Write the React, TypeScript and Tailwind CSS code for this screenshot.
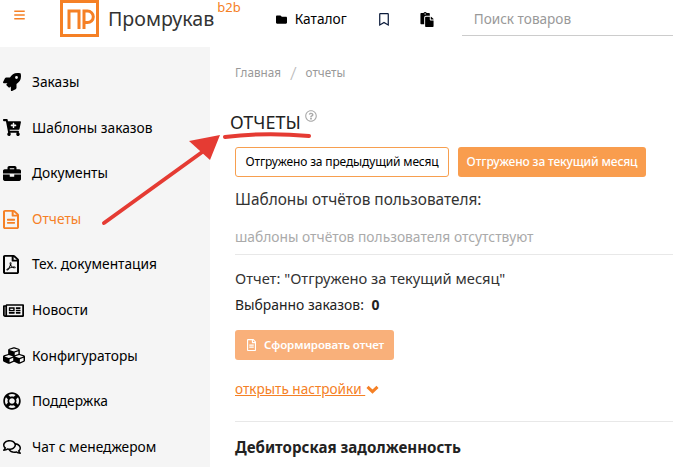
import React from "react";
import { FaBars, FaFolder, FaRegBookmark, FaPaste, FaRocket, FaCartPlus, FaBriefcase, FaRegFileAlt, FaRegFilePdf, FaRegNewspaper, FaCubes, FaRegLifeRing, FaRegComments, FaRegQuestionCircle } from "react-icons/fa";

const items = [
  { label: "Заказы", Icon: FaRocket, cls: "w-[18px] h-[18px]" },
  { label: "Шаблоны заказов", Icon: FaCartPlus, cls: "w-[18px] h-[17px]" },
  { label: "Документы", Icon: FaBriefcase, cls: "w-[18px] h-[17px]" },
  { label: "Отчеты", Icon: FaRegFileAlt, cls: "w-[16px] h-[19px]", active: true },
  { label: "Тех. документация", Icon: FaRegFilePdf, cls: "w-[16px] h-[19px]" },
  { label: "Новости", Icon: FaRegNewspaper, cls: "w-[21px] h-[17px]" },
  { label: "Конфигураторы", Icon: FaCubes, cls: "w-[22px] h-[19px]" },
  { label: "Поддержка", Icon: FaRegLifeRing, cls: "w-[18px] h-[18px]" },
  { label: "Чат с менеджером", Icon: FaRegComments, cls: "w-[18px] h-[16px]" },
];

export default function App() {
  return (
    <div className="relative w-[673px] h-[467px] overflow-hidden bg-white font-['Noto_Sans',sans-serif] text-[#111]">
      <header className="h-[47px] flex items-start">
        <FaBars className="ml-[13px] mt-[9px] w-[13px] h-[12px] text-[#f58025]" />
        <svg viewBox="0 0 39 37" className="ml-[34px] w-[39px] h-[37px]">
          <rect x="1.500" y="1.500" width="36" height="34" fill="none" stroke="#f58025" strokeWidth="3" />
          <path d="M9 29V11H19V29M24 29V11h3.500a5.800 5.800 0 0 1 0 11.600H24" fill="none" stroke="#f58025" strokeWidth="3" />
        </svg>
        <span className="ml-[9px] mt-[5px] text-[19.600px] leading-[28px] text-[#333]">Промрукав</span>
        <span className="ml-[3px] mt-0 text-[13px] leading-[14px] text-[#f58025]">b2b</span>
        <FaFolder className="ml-[34px] mt-[14px] w-[13px] h-[11px] text-black" />
        <span className="ml-[7px] mt-[9px] text-[13.700px] leading-[20px] text-black">Каталог</span>
        <FaRegBookmark className="ml-[32px] mt-[13px] w-[10px] h-[13px] text-[#0a1a3a]" />
        <FaPaste className="ml-[31px] mt-[12px] w-[14px] h-[15px] text-black" />
        <div className="ml-[28px] flex-1 h-[36px] border-b border-[#ccc] pl-[12px] pt-[9px] text-[13.600px] leading-[20px] text-[#999]">Поиск товаров</div>
      </header>
      <div className="flex h-[420px]">
        <nav className="w-[210px] shrink-0 bg-[#f5f5f5] pt-[12.500px] flex flex-col">
          {items.map(({ label, Icon, cls, active }) => (
            <div key={label} className={`h-[45.6px] shrink-0 flex items-center pl-[3px] text-[13.750px] ${active ? "text-[#f58025]" : "text-black"}`}>
              <span className="w-[29px] flex justify-start"><Icon preserveAspectRatio="none" className={cls} /></span>
              {label}
            </div>
          ))}
        </nav>
        <main className="flex-1 pl-[25px] min-w-0">
          <div className="mt-[17px] h-[18px] flex items-center text-[11.700px] text-[#999]">
            Главная<span className="mx-[9px] text-[19px] leading-[18px] text-[#bbb] font-light">/</span>отчеты
          </div>
          <h1 className="mt-[27px] ml-[-5px] flex items-start text-[18px] leading-[26px] text-[#222]">
            ОТЧЕТЫ
            <FaRegQuestionCircle className="ml-[4px] mt-[1px] w-[12px] h-[12px] text-[#aaa]" />
          </h1>
          <div className="mt-[12px] flex gap-[9px]">
            <button className="w-[214px] h-[30px] border border-[#f79f4f] rounded-[3px] text-[12px] tracking-[-0.15px] text-black">Отгружено за предыдущий месяц</button>
            <button className="w-[188px] h-[30px] bg-[#f99d4e] rounded-[3px] text-[12px] tracking-[-0.15px] font-medium text-white">Отгружено за текущий месяц</button>
          </div>
          <p className="mt-[12px] text-[15.400px] leading-[22px] text-[#333]">Шаблоны отчётов пользователя:</p>
          <p className="mt-[16px] text-[13.800px] leading-[20px] text-[#aaa]">шаблоны отчётов пользователя отсутствуют</p>
          <hr className="mt-[7px] border-[#e8e8e8]" />
          <p className="mt-[12px] text-[14.700px] leading-[22px] text-[#333]">Отчет: "Отгружено за текущий месяц"</p>
          <p className="mt-[7px] text-[13.900px] leading-[18px] text-[#222]">Выбранно заказов: <b className="ml-[4px]">0</b></p>
          <button className="mt-[16px] w-[159px] h-[30px] bg-[#f9b07a] rounded-[3px] flex items-center pl-[11px] text-[11.500px] tracking-[-0.1px] font-semibold text-white">
            <FaRegFileAlt className="mr-[7px] w-[11px] h-[12px]" />Сформировать отчет
          </button>
          <div className="mt-[19px] flex items-center text-[13.600px] leading-[20px] text-[#f58025]">
            <span className="underline">открыть настройки&nbsp;</span>
            <svg viewBox="0 0 13 9" className="ml-[1px] mt-[1px] w-[13px] h-[9px]"><path d="M1.500 1.800 6.500 6.600 11.500 1.800" fill="none" stroke="#f58025" strokeWidth="3" /></svg>
          </div>
          <hr className="mt-[22px] border-[#e8e8e8]" />
          <h2 className="mt-[14px] text-[15.100px] leading-[22px] font-bold text-[#222]">Дебиторская задолженность</h2>
        </main>
      </div>
      <svg className="absolute inset-0 pointer-events-none" width="673" height="467" viewBox="0 0 673 467">
        <path d="M104 223 L205 150" stroke="#e53b33" strokeWidth="4" strokeLinecap="round" />
        <path d="M220 135 L189 141 L210 160 Z" fill="#e53b33" />
        <path d="M225 137 Q265 132 309 136" stroke="#e53b33" strokeWidth="4" strokeLinecap="round" fill="none" />
      </svg>
    </div>
  );
}
